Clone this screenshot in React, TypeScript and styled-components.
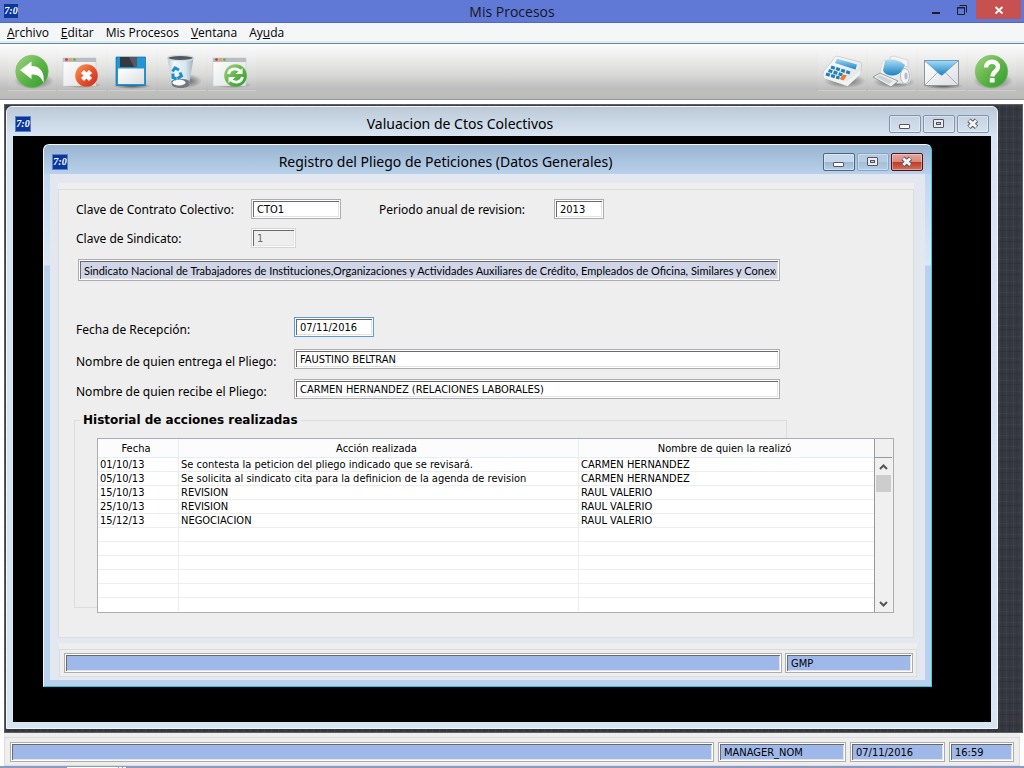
import React from "react";
import styled, { createGlobalStyle, css } from "styled-components";

const ui = '"Open Sans", "Noto Sans", sans-serif';
const caption = '"Noto Sans", "Open Sans", sans-serif';
const small = '"DejaVu Sans Condensed", "DejaVu Sans", "Noto Sans", sans-serif';
const form = '"Noto Sans", "DejaVu Sans", sans-serif';

const GlobalStyle = createGlobalStyle`
  * { box-sizing: border-box; }
  body { margin: 0; background: #fff; color: #000; font-family: ${ui}; }
  button, input { font: inherit; color: inherit; margin: 0; }
`;

const Page = styled.div`
  min-height: 100vh;
  display: flex;
  flex-direction: column;
`;

/* ---------- application bar ---------- */

const AppBar = styled.header`
  height: 23px;
  display: grid;
  grid-template-columns: 1fr auto 1fr;
  align-items: start;
  background: #6079d6;
  border-bottom: 1px solid #4f6abf;
  padding: 0 3px;
`;

const AppTitle = styled.h1`
  margin: 0;
  font-size: 14px;
  line-height: 23px;
  font-weight: 400;
  color: #14161f;
`;

const Logo = styled.span`
  width: 16px;
  height: 16px;
  display: block;
  background: #0b379c;
  border: 1px solid #5c80c4;
  color: #fff;
  font: italic bold 10px/13px "Liberation Serif", serif;
  text-align: center;
`;

const AppLogo = styled(Logo)`
  margin-top: 3px;
`;

const AppControls = styled.div`
  display: flex;
  justify-content: flex-end;
`;

const AppControl = styled.button<{ $close?: boolean }>`
  width: ${(p) => (p.$close ? 45 : 26)}px;
  height: 19px;
  padding: 0;
  border: 0;
  background: ${(p) => (p.$close ? "#c75050" : "transparent")};
  svg { display: block; margin: 0 auto; }
`;

/* ---------- menu ---------- */

const MenuBar = styled.nav`
  height: 21px;
  display: flex;
  gap: 12px;
  padding: 0 7px;
  background: #f4f6f8;
  border-bottom: 1px solid #4a93a3;
  box-shadow: inset 0 -2px 0 #e6e8ea;
`;

const MenuLink = styled.a`
  color: #000;
  text-decoration: none;
  font-size: 12px;
  line-height: 20px;
`;

/* ---------- toolbar ---------- */

const ToolBar = styled.div`
  height: 56px;
  display: flex;
  justify-content: space-between;
  align-items: flex-start;
  padding: 4px 8px 0;
  background: linear-gradient(#fcfcfc, #d9d9d8 55%, #bababa 84%, #c0c0be 85%, #b9b9b7);
  border-bottom: 1px solid #979797;
`;

const ToolGroup = styled.div`
  display: flex;
  gap: 2px;
`;

const ToolButton = styled.button`
  width: 48px;
  height: 43px;
  padding: 0;
  border: 0;
  border-bottom: 1px solid #cfcfce;
  background: linear-gradient(rgba(255, 255, 255, 0.12), rgba(255, 255, 255, 0.02));
  svg { display: block; }
`;

/* ---------- MDI desktop and windows ---------- */

const Desktop = styled.main`
  flex: 1;
  display: flex;
  margin: 4px 1px 0 4px;
  padding: 1px 24px 3px 1px;
  border: 1px solid #5f6062;
  background-color: #363841;
  background-image:
    repeating-linear-gradient(90deg, rgba(255, 255, 255, 0.04) 0 1px, transparent 1px 3px, rgba(0, 0, 0, 0.08) 3px 4px, transparent 4px 7px),
    repeating-linear-gradient(rgba(255, 255, 255, 0.03) 0 1px, transparent 1px 4px, rgba(0, 0, 0, 0.1) 4px 5px, transparent 5px 11px);
`;

const Window = styled.section<{ $active?: boolean }>`
  flex: 1;
  min-width: 0;
  display: flex;
  flex-direction: column;
  border: 1px solid #f4f8fc;
  border-radius: 6px 6px 0 0;
  ${(p) =>
    p.$active
      ? css`
          margin: 8px 59px 35px 30px;
          padding: 0 6px 6px;
          border-right-color: #35cfe6;
          border-bottom-color: #1fc8e4;
          background:
            linear-gradient(#99b4d1, #b9d1ea) 0 0 / 100% 29px no-repeat,
            linear-gradient(#bad2ec, #dbe7f5 120px, #b9d1ea 121px);
        `
      : css`
          padding: 0 6px 6px;
          background: linear-gradient(#bccad8, #d8e4f1 29px, #d7e4f2);
        `}
`;

const TitleBar = styled.header`
  height: 29px;
  display: grid;
  grid-template-columns: auto 1fr auto;
  align-items: center;
  padding: 4px 2px 0;
`;

const WindowTitle = styled.h2`
  margin: 0;
  font-family: ${caption};
  font-size: 14px;
  line-height: 20px;
  font-weight: 400;
  text-align: center;
`;

const WindowControls = styled.div`
  display: flex;
  justify-content: flex-end;
  gap: 2px;
`;

const WindowControl = styled.button<{ $tone?: "plain" | "blue" | "faded" | "red" }>`
  width: 32px;
  height: 18px;
  padding: 0;
  border: 1px solid #8393ae;
  border-radius: 2px;
  background: transparent;
  box-shadow: inset 0 0 0 1px rgba(255, 255, 255, 0.35);
  svg { display: block; margin: 0 auto; }
  ${(p) =>
    p.$tone === "blue" &&
    css`
      border-color: #4f6580;
      background: linear-gradient(#c5d8eb 50%, #9ab5d2 50%, #b8cfe6);
    `}
  ${(p) =>
    p.$tone === "faded" &&
    css`
      border-color: #8aa4c2;
      background: linear-gradient(#b4cbe2 50%, #a3bdd9 50%, #b3cce6);
    `}
  ${(p) =>
    p.$tone === "red" &&
    css`
      border-color: #4a1420;
      background: linear-gradient(#e5a69b, #d98779 50%, #b93a25 50%, #d4705a);
    `}
`;

const BlackArea = styled.div`
  flex: 1;
  display: flex;
  background: #000;
`;

const Client = styled.div`
  flex: 1;
  display: flex;
  flex-direction: column;
  gap: 5px;
  padding: 9px 11px 3px 8px;
  background: #e2e7f0;
`;

const Panel = styled.form`
  flex: 1;
  padding-top: 6px;
  display: flex;
  background: #eee;
`;

const PanelBody = styled.div`
  flex: 1;
  min-width: 0;
  padding: 9px 133px 24px 17px;
  border: 1px solid #dcdcdc;
`;

/* ---------- fields ---------- */

const Field = styled.input<{ $width?: number; $fill?: string; $focus?: boolean }>`
  ${(p) => (p.$width ? `flex: none; width: ${p.$width}px;` : "flex: 1; min-width: 0;")}
  height: 20px;
  padding: 2px 3px 1px 5px;
  border: 1px solid ${(p) => (p.$focus ? "#569de5" : "#abadb3")};
  border-radius: 0;
  outline: 0;
  background: ${(p) => p.$fill ?? "#fff"};
  box-shadow:
    inset 0 0 0 1px #fff,
    inset 2px 2px 0 #696969,
    inset -2px -2px 0 #e3e3e3;
  font-family: ${small};
  font-size: 11px;
  &:disabled {
    color: #6d6d6d;
    border-color: #d5d5d5;
  }
`;

const UnionField = styled(Field)`
  height: 22px;
  margin-left: 2px;
  padding-top: 1px;
  font-family: Lato, ${small};
`;

const Row = styled.div<{ $gap?: number }>`
  display: flex;
  margin-top: ${(p) => p.$gap ?? 0}px;
`;

const Label = styled.label<{ $width: number; $low?: boolean }>`
  flex: none;
  width: ${(p) => p.$width}px;
  padding-top: ${(p) => (p.$low ? 5 : 3)}px;
  font-family: ${form};
  font-size: 12px;
  line-height: 15px;
  white-space: nowrap;
`;

const PeriodLabel = styled(Label)`
  margin-left: 38px;
`;

const History = styled.fieldset`
  min-width: 0;
  margin: 13px -7px 0 -2px;
  padding: 0;
  border: 1px solid #dcdcdc;
`;

const HistoryLegend = styled.legend`
  margin-left: 5px;
  padding: 0 3px;
  font-family: "DejaVu Sans", sans-serif;
  font-size: 12px;
  line-height: 16px;
  font-weight: 700;
`;

const Grid = styled.div`
  position: relative;
  display: flex;
  height: 175px;
  margin: 10px -108px -6px 22px;
  border: 1px solid #abadb3;
  background: #fff;
`;

const HistoryTable = styled.table`
  flex: 1;
  width: 0;
  align-self: flex-start;
  table-layout: fixed;
  border-collapse: separate;
  border-spacing: 0;
  font-family: ${small};
  font-size: 11px;
  th {
    height: 19px;
    padding: 2px 4px 0 0;
    line-height: 16px;
    font-weight: 400;
    background: #fcfcfc;
    border-bottom: 1px solid #e3eefa;
    border-right: 1px solid #e3eefa;
  }
  td {
    height: 14px;
    padding: 1px 2px 0;
    line-height: 12px;
    white-space: nowrap;
    border-bottom: 1px solid #ededed;
    border-right: 1px solid #ededed;
  }
  th:last-child, td:last-child { border-right: 0; }
  tr:last-child td { height: 13px; border-bottom: 0; }
`;

const ScrollBar = styled.div`
  width: 19px;
  display: flex;
  flex-direction: column;
  border-left: 1px solid #9a9a9a;
  padding-right: 1px;
  background: #f0f0f0;
`;

const ScrollCorner = styled.div`
  height: 19px;
  border-bottom: 1px solid #9a9a9a;
`;

const ScrollButton = styled.button`
  width: 100%;
  height: 17px;
  padding: 0;
  border: 0;
  background: transparent;
  svg { display: block; margin: 0 auto; }
`;

const ScrollTrack = styled.div`
  flex: 1;
  padding: 0 1px;
`;

const ScrollThumb = styled.div`
  height: 17px;
  background: #cdcdcd;
`;

/* ---------- status bars ---------- */

const WindowStatus = styled.footer`
  margin: 0 -3px 0 1px;
  padding-top: 6px;
  background: #eee;
`;

const StatusFields = styled.div<{ $outer?: boolean }>`
  display: flex;
  gap: ${(p) => (p.$outer ? 4 : 3)}px;
  padding: ${(p) => (p.$outer ? "4px 5px 3px" : "3px 3px 3px 4px")};
  border: 1px solid #dcdcdc;
`;

const AppStatus = styled.footer`
  margin: 0 4px 0 4px;
  padding-top: 4px;
  background: #eee;
`;

const BottomEdge = styled.div`
  height: 2px;
  padding-left: 67px;
  display: flex;
  gap: 1px;
  background: #8e99c2;
`;

const EdgeChip = styled.span<{ $width: number }>`
  width: ${(p) => p.$width}px;
  height: 1px;
  margin-top: 1px;
  background: #fff;
`;

/* ---------- icons ---------- */

const DefsSvg = styled.svg`
  position: absolute;
`;

const Defs = () => (
  <DefsSvg width="0" height="0" aria-hidden="true">
    <defs>
      <linearGradient id="green" x1="0" y1="0" x2="1" y2="1">
        <stop offset="0" stopColor="#a5d384" />
        <stop offset=".5" stopColor="#5fb548" />
        <stop offset="1" stopColor="#2f9a2c" />
      </linearGradient>
      <linearGradient id="red" x1="0" y1="0" x2="1" y2="1">
        <stop offset="0" stopColor="#f49a5a" />
        <stop offset=".5" stopColor="#e8562c" />
        <stop offset="1" stopColor="#c92a20" />
      </linearGradient>
      <linearGradient id="paper" x1="0" y1="0" x2="1" y2="1">
        <stop offset="0" stopColor="#fff" />
        <stop offset="1" stopColor="#dcdee0" />
      </linearGradient>
      <linearGradient id="sky" x1="0" y1="0" x2="0" y2="1">
        <stop offset="0" stopColor="#a9dcf5" />
        <stop offset="1" stopColor="#1b82c4" />
      </linearGradient>
      <linearGradient id="glass" x1="0" y1="0" x2="1" y2="0">
        <stop offset="0" stopColor="#b9c6cf" />
        <stop offset=".25" stopColor="#f2f8fb" />
        <stop offset=".7" stopColor="#d5e6f0" />
        <stop offset="1" stopColor="#9eafba" />
      </linearGradient>
      <radialGradient id="shade">
        <stop offset="0" stopColor="#000" stopOpacity=".55" />
        <stop offset="1" stopColor="#000" stopOpacity="0" />
      </radialGradient>
    </defs>
  </DefsSvg>
);

const Tool = ({ children }: { children: React.ReactNode }) => (
  <svg width="48" height="42" viewBox="0 0 48 42" aria-hidden="true">
    {children}
  </svg>
);

const MiniWindow = () => (
  <>
    <ellipse cx="24" cy="37" rx="20" ry="3" fill="url(#shade)" />
    <rect x="5" y="10" width="33" height="28" fill="url(#paper)" stroke="#c9cbcd" strokeWidth=".6" />
    <rect x="5" y="10" width="33" height="4" fill="#b9bcc0" />
    <circle cx="8.5" cy="11.6" r="1.4" fill="#d5303a" />
    <circle cx="12.5" cy="11.6" r="1.4" fill="#f0a030" />
    <circle cx="16.5" cy="11.6" r="1.4" fill="#62b33c" />
  </>
);

const BackIcon = () => (
  <Tool>
    <ellipse cx="26" cy="33" rx="20" ry="8" fill="url(#shade)" />
    <circle cx="24" cy="23.5" r="16.3" fill="url(#green)" stroke="#77b862" strokeWidth=".6" />
    <path d="M12 22 23.500 13.500v4.500C32 18 37 24 35.500 35 33.500 29 30 26.500 23.500 26.500v4.500Z" fill="#fff" />
  </Tool>
);

const CloseIcon = () => (
  <Tool>
    <MiniWindow />
    <circle cx="28.500" cy="27.500" r="11.300" fill="url(#red)" />
    <path d="m24.500 23.500 8 8m0-8-8 8" stroke="#fff" strokeWidth="4.400" />
  </Tool>
);

const SaveIcon = () => (
  <Tool>
    <ellipse cx="24" cy="38" rx="19" ry="3" fill="url(#shade)" />
    <path d="M8 9h29.500v28.500H8Z" fill="#2196d3" stroke="#1671a8" strokeWidth=".7" />
    <rect x="12" y="9" width="17" height="10" fill="#35383c" />
    <path d="M21 9h8v10h-3Z" fill="#565a60" />
    <rect x="10" y="20.500" width="26" height="15.500" fill="url(#paper)" />
  </Tool>
);

const BinIcon = () => (
  <Tool>
    <ellipse cx="29" cy="33" rx="15" ry="7" fill="url(#shade)" />
    <path d="M9.500 10 14 37c3 4.500 14 4.500 17 0l4.500-27Z" fill="url(#glass)" />
    <path d="M13.300 33c4-3 14-3 18.200 0L31 37.500c-3 3.500-13.500 3.500-17 0Z" fill="#74787c" />
    <ellipse cx="21" cy="34.500" rx="6.500" ry="3" fill="#fafafa" />
    <ellipse cx="22.500" cy="10" rx="13" ry="2.600" fill="#4f5960" stroke="#d5dbdf" strokeWidth="1.300" />
    <g fill="none" stroke="#1c8fce" strokeWidth="3">
      <path d="M14.500 23.500 17 20l4 2" />
      <path d="m22 24.500 1.500 3.500-4 2.500" />
      <path d="m18.500 31-3.500-1.500v-4" />
    </g>
  </Tool>
);

const RefreshIcon = () => (
  <Tool>
    <MiniWindow />
    <circle cx="27.500" cy="27.500" r="11.300" fill="url(#green)" />
    <g fill="none" stroke="#fff" strokeWidth="2.800">
      <path d="M20.500 26c1-5.500 7.500-6.500 11.500-3" />
      <path d="M34.500 29c-1 5.500-7.500 6.500-11.500 3" />
    </g>
    <path d="M34.500 20v6h-7Z M20.500 35v-6h7Z" fill="#fff" />
  </Tool>
);

const CalculatorIcon = () => (
  <Tool>
    <ellipse cx="27" cy="33" rx="21" ry="7" fill="url(#shade)" />
    <path d="M5 24 13.500 14l3-4.500c1-1.500 2-1.500 4-1L42 14c1.500.500 2 1.500 1.500 3l-1 9-13 12L6 30Z" fill="url(#paper)" stroke="#b5bbc0" strokeWidth=".6" />
    <path d="m19 10.500 20 6-1.500 5-20.500-6.500Z" fill="url(#sky)" />
    <path d="m6 30 23.500 8 13-12v-4l-13 11L5 26Z" fill="#f1f2f3" />
    <g fill="none" stroke="#2080b8" strokeWidth="3.200" strokeDasharray="4 1.300">
      <path d="m13 19 19 6" />
      <path d="m10.500 22.500 14 4.500" />
      <path d="m8 26 13.500 4" />
    </g>
    <path d="m25.500 26.500 3.500 1-3.500 5-4-1.500Z" fill="#ed7a30" />
  </Tool>
);

const PrinterIcon = () => (
  <Tool>
    <ellipse cx="26" cy="34" rx="21" ry="6" fill="url(#shade)" />
    <path d="m22 9 4-1 14 4v7l-18-3Z" fill="#f2f3f4" stroke="#bfc4c8" strokeWidth=".6" />
    <path d="M15 13c8-3 18-1 22 5l4 2c4 5 3 14-2 16l-14-1-13-9Z" fill="url(#paper)" stroke="#c3c8cc" strokeWidth=".5" />
    <path d="M17 12.500c7-2 15 0 20 4.500-3 7-7 10.500-12 10.500-5 0-9-2-10-5Z" fill="url(#sky)" />
    <ellipse cx="37" cy="28" rx="4.500" ry="7.500" fill="#f4f5f6" stroke="#a7adb1" strokeWidth=".8" />
    <ellipse cx="38" cy="28" rx="1.600" ry="3.500" fill="#b6bcc1" />
    <path d="m5 29 7-4 18 8-7 6Z" fill="#edeff0" stroke="#85898d" strokeWidth=".8" />
    <path d="m8 29 4-2 13 6-4 3Z" fill="#cfd3d6" />
  </Tool>
);

const MailIcon = () => (
  <Tool>
    <ellipse cx="25" cy="38" rx="20" ry="3" fill="url(#shade)" />
    <path d="M6.500 12.500h34v25h-34Z" fill="url(#paper)" stroke="#8f959a" />
    <path d="m7 37 13-13m20 13L27 24" stroke="#a9aeb2" fill="none" />
    <path d="M6.500 12.500h34L25.500 26c-1.500 1.500-2.500 1.500-4 0Z" fill="url(#sky)" stroke="#478fb5" strokeWidth=".6" />
  </Tool>
);

const HelpIcon = () => (
  <Tool>
    <ellipse cx="25" cy="33" rx="20" ry="8" fill="url(#shade)" />
    <circle cx="23.500" cy="23.500" r="16.300" fill="url(#green)" stroke="#77b862" strokeWidth=".6" />
    <path d="M18 19.500c0-7.500 12-7.500 12-.500 0 4.500-5.500 4.500-5.500 9.500" fill="none" stroke="#fff" strokeWidth="4.400" />
    <rect x="21.800" y="30" width="4.800" height="4.500" fill="#fff" />
  </Tool>
);

const Glyph = ({ kind }: { kind: "min" | "max" | "close" }) => (
  <svg width="16" height="12" viewBox="0 0 16 12" aria-hidden="true">
    {kind === "min" && <rect x="2.500" y="6.500" width="10" height="4" rx=".5" fill="#fff" stroke="#535666" />}
    {kind === "max" && (
      <>
        <rect x="2.500" y="1.500" width="10" height="8" rx=".5" fill="#e8eaee" stroke="#535666" />
        <rect x="5.500" y="4.500" width="4" height="2" fill="#b5c4d8" stroke="#535666" />
      </>
    )}
    {kind === "close" && (
      <>
        <path d="m4 2.200 7.500 7m0-7L4 9.200" stroke="#535666" strokeWidth="4.800" />
        <path d="m4.300 2.500 6.900 6.400m0-6.400L4.300 8.900" stroke="#f4f4f4" strokeWidth="2.800" />
      </>
    )}
  </svg>
);

const Chevron = ({ down }: { down?: boolean }) => (
  <svg width="9" height="8" viewBox="0 0 9 8" aria-hidden="true">
    <path d={down ? "M1 2l3.500 3.500L8 2" : "M1 6l3.500-3.500L8 6"} fill="none" stroke="#555" strokeWidth="2" />
  </svg>
);

/* ---------- data ---------- */

const leftTools = [
  { name: "Regresar", Icon: BackIcon },
  { name: "Cerrar", Icon: CloseIcon },
  { name: "Guardar", Icon: SaveIcon },
  { name: "Borrar", Icon: BinIcon },
  { name: "Actualizar", Icon: RefreshIcon },
];

const rightTools = [
  { name: "Calculadora", Icon: CalculatorIcon },
  { name: "Imprimir", Icon: PrinterIcon },
  { name: "Correo", Icon: MailIcon },
  { name: "Ayuda", Icon: HelpIcon },
];

const history: [string, string, string][] = [
  ["01/10/13", "Se contesta la peticion del pliego indicado que se revisará.", "CARMEN HERNANDEZ"],
  ["05/10/13", "Se solicita al sindicato cita para la definicion de la agenda de revision", "CARMEN HERNANDEZ"],
  ["15/10/13", "REVISION", "RAUL VALERIO"],
  ["25/10/13", "REVISION", "RAUL VALERIO"],
  ["15/12/13", "NEGOCIACION", "RAUL VALERIO"],
  ...Array.from({ length: 6 }, (): [string, string, string] => ["", "", ""]),
];

const Tools = ({ items }: { items: typeof leftTools }) => (
  <ToolGroup>
    {items.map(({ name, Icon }) => (
      <ToolButton key={name} type="button" aria-label={name}>
        <Icon />
      </ToolButton>
    ))}
  </ToolGroup>
);

const Controls = ({ active }: { active?: boolean }) => (
  <WindowControls>
    <WindowControl type="button" aria-label="Minimizar" $tone={active ? "blue" : "plain"}>
      <Glyph kind="min" />
    </WindowControl>
    <WindowControl type="button" aria-label="Maximizar" $tone={active ? "faded" : "plain"}>
      <Glyph kind="max" />
    </WindowControl>
    <WindowControl type="button" aria-label="Cerrar" $tone={active ? "red" : "plain"}>
      <Glyph kind="close" />
    </WindowControl>
  </WindowControls>
);

const statusFill = "#9fb8ea";

export default function App() {
  return (
    <Page>
      <GlobalStyle />
      <Defs />
      <AppBar>
        <AppLogo>7:0</AppLogo>
        <AppTitle>Mis Procesos</AppTitle>
        <AppControls>
          <AppControl type="button" aria-label="Minimizar">
            <svg width="12" height="14" viewBox="0 0 12 14" aria-hidden="true">
              <rect x="1" y="9" width="8" height="2" fill="#1e1e28" />
            </svg>
          </AppControl>
          <AppControl type="button" aria-label="Restaurar">
            <svg width="12" height="14" viewBox="0 0 12 14" aria-hidden="true" fill="none" stroke="#1e1e28">
              <path d="M.500 4.500h7v7h-7ZM0 5h8M2.500 2.500h7v7" />
            </svg>
          </AppControl>
          <AppControl type="button" aria-label="Salir" $close>
            <svg width="12" height="14" viewBox="0 0 12 14" aria-hidden="true">
              <path d="m2.500 4 7 6.500m0-6.500-7 6.500" stroke="#fff" strokeWidth="1.800" />
            </svg>
          </AppControl>
        </AppControls>
      </AppBar>

      <MenuBar>
        <MenuLink href="#archivo"><u>A</u>rchivo</MenuLink>
        <MenuLink href="#editar"><u>E</u>ditar</MenuLink>
        <MenuLink href="#procesos">Mis Procesos</MenuLink>
        <MenuLink href="#ventana"><u>V</u>entana</MenuLink>
        <MenuLink href="#ayuda">Ay<u>u</u>da</MenuLink>
      </MenuBar>

      <ToolBar>
        <Tools items={leftTools} />
        <Tools items={rightTools} />
      </ToolBar>

      <Desktop>
        <Window>
          <TitleBar>
            <Logo>7:0</Logo>
            <WindowTitle>Valuacion de Ctos Colectivos</WindowTitle>
            <Controls />
          </TitleBar>
          <BlackArea>
            <Window $active>
              <TitleBar>
                <Logo>7:0</Logo>
                <WindowTitle>Registro del Pliego de Peticiones (Datos Generales)</WindowTitle>
                <Controls active />
              </TitleBar>
              <Client>
                <Panel>
                  <PanelBody>
                    <Row>
                      <Label htmlFor="contrato" $width={175}>Clave de Contrato Colectivo:</Label>
                      <Field id="contrato" $width={90} defaultValue="CTO1" />
                      <PeriodLabel htmlFor="periodo" $width={175}>Periodo anual de revision:</PeriodLabel>
                      <Field id="periodo" $width={50} defaultValue="2013" />
                    </Row>
                    <Row $gap={9}>
                      <Label htmlFor="sindicato" $width={175}>Clave de Sindicato:</Label>
                      <Field id="sindicato" $width={45} $fill="#eee" defaultValue="1" disabled />
                    </Row>
                    <Row $gap={11}>
                      <UnionField
                        aria-label="Nombre del sindicato"
                        $fill="#d0d6e8"
                        readOnly
                        value="Sindicato Nacional de Trabajadores de Instituciones,Organizaciones y Actividades Auxiliares de Crédito, Empleados de Oficina, Similares y Conexos"
                      />
                    </Row>
                    <Row $gap={36}>
                      <Label htmlFor="recepcion" $width={218} $low>Fecha de Recepción:</Label>
                      <Field id="recepcion" $width={80} $focus defaultValue="07/11/2016" />
                    </Row>
                    <Row $gap={12}>
                      <Label htmlFor="entrega" $width={218} $low>Nombre de quien entrega el Pliego:</Label>
                      <Field id="entrega" defaultValue="FAUSTINO BELTRAN" />
                    </Row>
                    <Row $gap={10}>
                      <Label htmlFor="recibe" $width={218} $low>Nombre de quien recibe el Pliego:</Label>
                      <Field id="recibe" defaultValue="CARMEN HERNANDEZ (RELACIONES LABORALES)" />
                    </Row>
                    <History>
                      <HistoryLegend>Historial de acciones realizadas</HistoryLegend>
                      <Grid>
                        <HistoryTable>
                          <colgroup>
                            <col style={{ width: 81 }} />
                            <col style={{ width: 400 }} />
                            <col />
                          </colgroup>
                          <thead>
                            <tr>
                              <th scope="col">Fecha</th>
                              <th scope="col">Acción realizada</th>
                              <th scope="col">Nombre de quien la realizó</th>
                            </tr>
                          </thead>
                          <tbody>
                            {history.map((cells, i) => (
                              <tr key={i}>
                                {cells.map((cell, j) => (
                                  <td key={j}>{cell}</td>
                                ))}
                              </tr>
                            ))}
                          </tbody>
                        </HistoryTable>
                        <ScrollBar>
                          <ScrollCorner />
                          <ScrollButton type="button" aria-label="Subir"><Chevron /></ScrollButton>
                          <ScrollTrack><ScrollThumb /></ScrollTrack>
                          <ScrollButton type="button" aria-label="Bajar"><Chevron down /></ScrollButton>
                        </ScrollBar>
                      </Grid>
                    </History>
                  </PanelBody>
                </Panel>
                <WindowStatus>
                  <StatusFields>
                    <Field aria-label="Mensaje" $fill={statusFill} readOnly value="" />
                    <Field aria-label="Módulo" $fill={statusFill} $width={128} readOnly value="GMP" />
                  </StatusFields>
                </WindowStatus>
              </Client>
            </Window>
          </BlackArea>
        </Window>
      </Desktop>

      <AppStatus>
        <StatusFields $outer>
          <Field aria-label="Estado" $fill={statusFill} readOnly value="" />
          <Field aria-label="Usuario" $fill={statusFill} $width={128} readOnly value="MANAGER_NOM" />
          <Field aria-label="Fecha" $fill={statusFill} $width={95} readOnly value="07/11/2016" />
          <Field aria-label="Hora" $fill={statusFill} $width={65} readOnly value="16:59" />
        </StatusFields>
      </AppStatus>
      <BottomEdge>
        <EdgeChip $width={51} />
        <EdgeChip $width={3} />
        <EdgeChip $width={3} />
      </BottomEdge>
    </Page>
  );
}
